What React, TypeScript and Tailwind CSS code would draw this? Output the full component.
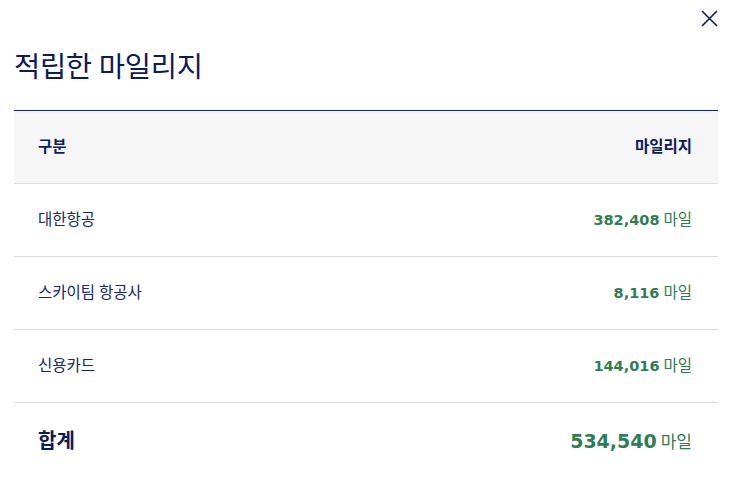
const rows = [
  { name: "대한항공", value: "382,408" },
  { name: "스카이팀 항공사", value: "8,116" },
  { name: "신용카드", value: "144,016" },
];

export default function App() {
  return (
    <div className="w-[738px] h-[493px] bg-white font-['Noto_Sans','Noto_Sans_CJK_KR',sans-serif] text-[#0c1a5e] relative">
      <button className="absolute right-[20px] top-[10px] w-[17px] h-[17px]" aria-label="닫기">
        <svg viewBox="0 0 17 17" width="17" height="17" fill="none" stroke="#0c1a5e" strokeWidth="1.6">
          <path d="M1 1 L16 16 M16 1 L1 16" />
        </svg>
      </button>
      <div className="pl-[14px] pr-[20px] pt-[46px]">
        <h1 className="text-[28.5px] leading-[40px] font-normal tracking-[-0.3px]">적립한 마일리지</h1>
        <div className="mt-[24px] border-t border-[#0b2585]">
          <div className="h-[73px] bg-[#f6f6f6] border-b border-[#dcdcdc] flex items-center justify-between px-[24px] text-[15.5px] font-bold">
            <span>구분</span>
            <span className="mr-[2px]">마일리지</span>
          </div>
          {rows.map((r) => (
            <div
              key={r.name}
              className="h-[73px] border-b border-[#dcdcdc] flex items-center justify-between px-[24px] text-[15.5px] text-[#16266a]"
            >
              <span>{r.name}</span>
              <span className="mr-[2px] flex items-baseline gap-[4px] text-[#2f7d54]">
                <span className="font-['DejaVu_Sans',sans-serif] text-[14.5px] font-bold">{r.value}</span>
                <span className="text-[15.5px]">마일</span>
              </span>
            </div>
          ))}
          <div className="h-[76px] flex items-center justify-between px-[24px]">
            <span className="text-[20px] font-bold">합계</span>
            <span className="mr-[2px] flex items-baseline gap-[4px] text-[#2f7d54]">
              <span className="font-['DejaVu_Sans',sans-serif] text-[19px] font-bold">534,540</span>
              <span className="text-[17px]">마일</span>
            </span>
          </div>
        </div>
      </div>
    </div>
  );
}
